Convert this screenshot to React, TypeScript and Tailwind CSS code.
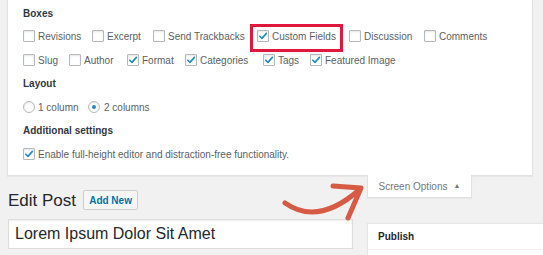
import React from "react";

function Check({ checked }: { checked?: boolean }) {
  return (
    <span className="w-[12px] h-[12px] shrink-0 border border-[#b4b9be] bg-white rounded-[1px] shadow-[inset_0_1px_2px_rgba(0,0,0,0.1)] flex items-center justify-center">
      {checked && (
        <svg width="10" height="10" viewBox="0 0 10 10">
          <path d="M1.8 5.2 L4 7.4 L8.4 2.4" fill="none" stroke="#1e8cbe" strokeWidth="1.6" strokeLinecap="round" strokeLinejoin="round" />
        </svg>
      )}
    </span>
  );
}

function Radio({ checked }: { checked?: boolean }) {
  return (
    <span className="w-[12px] h-[12px] shrink-0 border border-[#b4b9be] bg-white rounded-full shadow-[inset_0_1px_2px_rgba(0,0,0,0.1)] flex items-center justify-center">
      {checked && <span className="w-[4px] h-[4px] rounded-full bg-[#1e8cbe]" />}
    </span>
  );
}

function Item({ label, checked, w }: { label: string; checked?: boolean; w: string }) {
  return (
    <div className={`flex items-center gap-[3px] shrink-0 ${w}`}>
      <Check checked={checked} />
      <span>{label}</span>
    </div>
  );
}

export default function App() {
  return (
    <div className="relative w-[543px] h-[255px] overflow-hidden bg-[#f1f1f1] font-['Liberation_Sans',Arial,sans-serif] text-[10px] text-[#5c5f63]">
      {/* Screen options panel */}
      <div className="ml-[7px] w-[526px] h-[176px] bg-white border-x border-b border-[#e1e1e1] shadow-[0_1px_1px_rgba(0,0,0,0.04)] pl-[15px] pt-[3px] flex flex-col">
        <div className="h-[20px] flex items-center font-bold text-[#32373c]">Boxes</div>
        <div className="mt-[3px] h-[20px] flex items-center">
          <Item label="Revisions" w="w-[69px]" />
          <Item label="Excerpt" w="w-[61px]" />
          <Item label="Send Trackbacks" w="w-[104px]" />
          <div className="relative w-[92px] shrink-0 flex items-center gap-[3px]">
            <Check checked />
            <span>Custom Fields</span>
            <span className="absolute left-[-7px] top-[-5px] w-[93px] h-[28px] border-[3px] border-[#e2173d]" />
          </div>
          <Item label="Discussion" w="w-[75px]" />
          <Item label="Comments" w="w-[80px]" />
        </div>
        <div className="mt-[4px] h-[20px] flex items-center">
          <Item label="Slug" w="w-[46px]" />
          <Item label="Author" w="w-[58px]" />
          <Item label="Format" checked w="w-[58px]" />
          <Item label="Categories" checked w="w-[78px]" />
          <Item label="Tags" checked w="w-[47px]" />
          <Item label="Featured Image" checked w="w-[100px]" />
        </div>
        <div className="mt-[3px] h-[20px] flex items-center font-bold text-[#32373c]">Layout</div>
        <div className="mt-[4px] h-[20px] flex items-center">
          <div className="w-[65px] flex items-center gap-[3px]">
            <Radio />
            <span>1 column</span>
          </div>
          <div className="flex items-center gap-[4px]">
            <Radio checked />
            <span>2 columns</span>
          </div>
        </div>
        <div className="mt-[3px] h-[20px] flex items-center font-bold text-[#32373c]">Additional settings</div>
        <div className="mt-[4px] h-[20px] flex items-center gap-[3px]">
          <Check checked />
          <span>Enable full-height editor and distraction-free functionality.</span>
        </div>
      </div>

      {/* Below */}
      <div className="flex">
        <div className="ml-[8px] w-[345px] shrink-0 flex flex-col">
          <div className="mt-[14px] h-[20px] flex items-center">
            <span className="text-[17px] text-[#23282d] leading-none">Edit Post</span>
            <span className="ml-[7px] w-[55px] h-[20px] border border-[#ccc] bg-[#f7f7f7] rounded-[2px] flex items-center justify-center font-bold text-[#0073aa]">
              Add New
            </span>
          </div>
          <div className="mt-[9px] h-[30px] bg-white border border-[#ddd] shadow-[inset_0_1px_2px_rgba(0,0,0,0.07)] flex items-center pl-[6px] text-[16px] text-[#23282d]">
            Lorem Ipsum Dolor Sit Amet
          </div>
        </div>
        <div className="ml-[14px] shrink-0 flex flex-col">
          <div className="mt-[-1px] w-[105px] h-[23px] bg-white border-x border-b border-[#e1e1e1] shadow-[0_1px_1px_rgba(0,0,0,0.04)] flex items-center justify-center gap-[6px] text-[#72777c]">
            <span>Screen Options</span>
            <span className="text-[7px]">▲</span>
          </div>
          <div className="mt-[25px] w-[200px] bg-white border border-[#e5e5e5]">
            <div className="h-[26px] border-b border-[#eee] flex items-center pl-[10px] font-bold text-[#23282d]">Publish</div>
            <div className="h-[10px]" />
          </div>
        </div>
      </div>

      {/* Hand-drawn arrow */}
      <svg className="absolute left-0 top-0 pointer-events-none" width="543" height="255" viewBox="0 0 543 255">
        <path d="M285 203 Q 318 226 359 190" fill="none" stroke="#d65a44" strokeWidth="5" strokeLinecap="round" />
        <path d="M333 186 L361 188 L348 218" fill="none" stroke="#d65a44" strokeWidth="5" strokeLinecap="round" strokeLinejoin="round" />
      </svg>
    </div>
  );
}
